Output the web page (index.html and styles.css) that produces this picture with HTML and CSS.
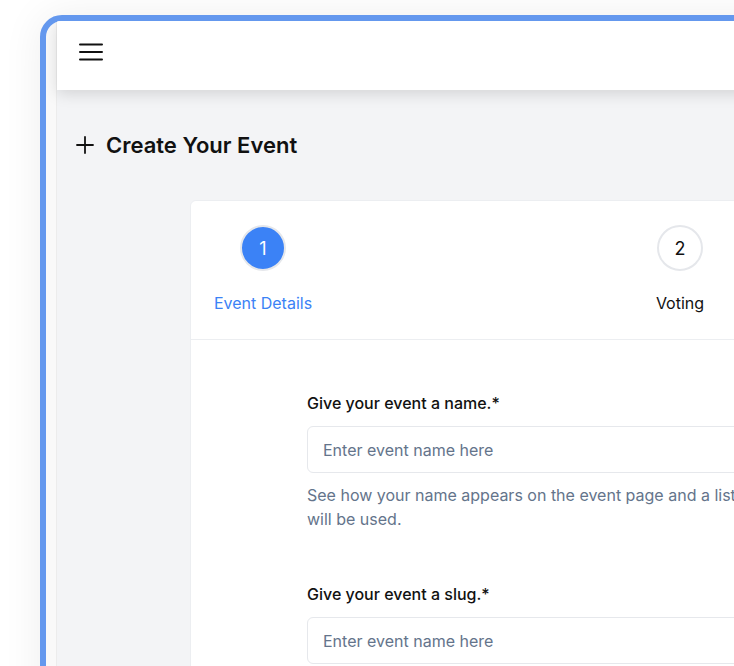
FILE: index.html
```html
<!DOCTYPE html>
<html lang="en">

<head>
    <meta charset="UTF-8" />
    <meta name="viewport" content="width=device-width, initial-scale=1.0" />
    <title>Create Your Event</title>
    <link rel="stylesheet" href="styles.css">
</head>

<body>
    <div class="device">
        <div class="screen">
            <div class="header">
                <svg class="menu-icon" width="24" height="18" viewBox="0 0 24 18">
                    <path d="M1 1.5h22M1 9h22M1 16.5h22" stroke="#111" stroke-width="2" stroke-linecap="round" />
                </svg>
            </div>

            <div class="page">
                <div class="page-title">
                    <svg width="18" height="18" viewBox="0 0 18 18">
                        <path d="M9 1v16M1 9h16" stroke="#111" stroke-width="1.8" stroke-linecap="round" />
                    </svg>
                    <h1>Create Your Event</h1>
                </div>

                <div class="card">
                    <div class="stepper">
                        <div class="step active">
                            <div class="step-circle">1</div>
                            <div class="step-label">Event Details</div>
                        </div>
                        <div class="step">
                            <div class="step-circle">2</div>
                            <div class="step-label">Voting</div>
                        </div>
                        <div class="step">
                            <div class="step-circle">3</div>
                            <div class="step-label">Review</div>
                        </div>
                    </div>

                    <form class="event-form">
                        <div class="field">
                            <label for="name">Give your event a name.*</label>
                            <input id="name" type="text" placeholder="Enter event name here">
                            <p class="help">See how your name appears on the event page and a list of places where it will be used.</p>
                        </div>
                        <div class="field">
                            <label for="slug">Give your event a slug.*</label>
                            <input id="slug" type="text" placeholder="Enter event name here">
                        </div>
                    </form>
                </div>
            </div>
        </div>
    </div>
</body>

</html>
```

FILE: styles.css
```css
body {
    margin: 0;
    font-family: 'Inter', 'Noto Sans', sans-serif;
    background-color: #fff;
    overflow: hidden;
    height: 666px;
    padding: 15px 0 0 40px;
    box-sizing: border-box;
}

.device {
    width: 1200px;
    height: 900px;
    border: 6px solid #6498ee;
    border-radius: 22px;
    background: #f9f9f9;
    padding-left: 10px;
    box-shadow: 0 0 40px rgba(0, 0, 0, 0.07);
    overflow: hidden;
}

.screen {
    height: 100%;
    background: #f3f4f6;
    border-left: 1px solid #ececec;
}

.header {
    height: 69px;
    box-sizing: border-box;
    background: #fff;
    display: flex;
    align-items: center;
    padding: 0 0 7px 22px;
    box-shadow: 0 4px 14px rgba(0, 0, 0, 0.13);
    position: relative;
}

.page {
    padding: 40px 0 0 19px;
}

.page-title {
    display: flex;
    align-items: center;
    gap: 12px;
}

.page-title h1 {
    margin: 0;
    font-size: 22px;
    font-weight: 600;
    color: #111;
    line-height: 30px;
}

.card {
    margin: 40px 0 0 114px;
    background: #fff;
    border: 1px solid #eceef1;
    border-radius: 6px;
}

.stepper {
    display: flex;
    gap: 317px;
    padding: 24px 0 24px 22px;
    border-bottom: 1px solid #eceef1;
}

.step {
    width: 100px;
    display: flex;
    flex-direction: column;
    align-items: center;
    gap: 20px;
}

.step-circle {
    width: 42px;
    height: 42px;
    border-radius: 50%;
    border: 2px solid #e5e7eb;
    background: #fff;
    color: #111;
    font-size: 18px;
    display: flex;
    align-items: center;
    justify-content: center;
}

.step-label {
    font-size: 16px;
    line-height: 24px;
    color: #111;
    white-space: nowrap;
}

.step.active .step-circle {
    background: #3b82f6;
    color: #fff;
}

.step.active .step-label {
    color: #3b82f6;
}

.event-form {
    padding: 51px 0 0 116px;
    width: 585px;
}

.field {
    margin-bottom: 51px;
}

.field label {
    display: block;
    font-size: 16px;
    line-height: 24px;
    font-weight: 500;
    color: #111;
    margin-bottom: 11px;
}

.field input {
    display: block;
    width: 100%;
    height: 47px;
    box-sizing: border-box;
    border: 1px solid #e6e8ec;
    border-radius: 6px;
    padding: 0 15px;
    font-family: inherit;
    font-size: 16px;
}

.field input::placeholder {
    color: #64748b;
}

.help {
    margin: 10px 0 0;
    font-size: 16px;
    line-height: 24px;
    color: #64748b;
}
```
